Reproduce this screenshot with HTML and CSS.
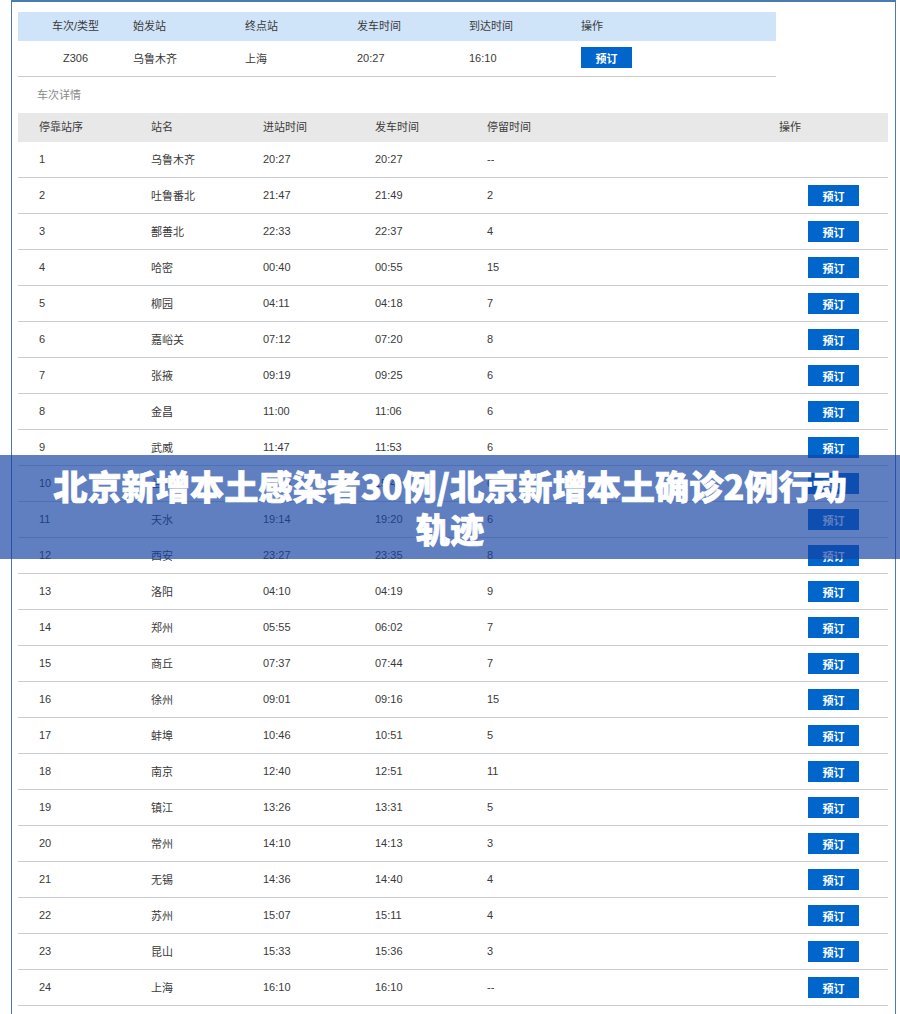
FILE: index.html
```html
<!DOCTYPE html>
<html lang="en">
<head>
    <meta charset="UTF-8">
    <meta name="viewport" content="width=device-width, initial-scale=1.0">
    <title>北京新增本土感染者30例/北京新增本土确诊2例行动轨迹</title>
    <link rel="stylesheet" href="styles.css">
</head>
<body>
    <div class="frame">
        <table class="train-table">
            <thead>
                <tr>
                    <th class="col-train">车次/类型</th>
                    <th>始发站</th>
                    <th>终点站</th>
                    <th>发车时间</th>
                    <th>到达时间</th>
                    <th>操作</th>
                </tr>
            </thead>
            <tbody>
                <tr>
                    <td class="col-train">Z306</td>
                    <td>乌鲁木齐</td>
                    <td>上海</td>
                    <td>20:27</td>
                    <td>16:10</td>
                    <td><button class="book-button">预订</button></td>
                </tr>
            </tbody>
        </table>

        <p class="section-title">车次详情</p>

        <table class="stop-table">
            <thead>
                <tr>
                    <th>停靠站序</th>
                    <th>站名</th>
                    <th>进站时间</th>
                    <th>发车时间</th>
                    <th>停留时间</th>
                    <th>操作</th>
                </tr>
            </thead>
            <tbody>
                <tr><td>1</td><td>乌鲁木齐</td><td>20:27</td><td>20:27</td><td>--</td><td></td></tr>
                <tr><td>2</td><td>吐鲁番北</td><td>21:47</td><td>21:49</td><td>2</td><td class="action"><button class="book-button">预订</button></td></tr>
                <tr><td>3</td><td>鄯善北</td><td>22:33</td><td>22:37</td><td>4</td><td class="action"><button class="book-button">预订</button></td></tr>
                <tr><td>4</td><td>哈密</td><td>00:40</td><td>00:55</td><td>15</td><td class="action"><button class="book-button">预订</button></td></tr>
                <tr><td>5</td><td>柳园</td><td>04:11</td><td>04:18</td><td>7</td><td class="action"><button class="book-button">预订</button></td></tr>
                <tr><td>6</td><td>嘉峪关</td><td>07:12</td><td>07:20</td><td>8</td><td class="action"><button class="book-button">预订</button></td></tr>
                <tr><td>7</td><td>张掖</td><td>09:19</td><td>09:25</td><td>6</td><td class="action"><button class="book-button">预订</button></td></tr>
                <tr><td>8</td><td>金昌</td><td>11:00</td><td>11:06</td><td>6</td><td class="action"><button class="book-button">预订</button></td></tr>
                <tr><td>9</td><td>武威</td><td>11:47</td><td>11:53</td><td>6</td><td class="action"><button class="book-button">预订</button></td></tr>
                <tr><td>10</td><td>兰州</td><td>15:40</td><td>15:46</td><td>6</td><td class="action"><button class="book-button">预订</button></td></tr>
                <tr><td>11</td><td>天水</td><td>19:14</td><td>19:20</td><td>6</td><td class="action"><button class="book-button">预订</button></td></tr>
                <tr><td>12</td><td>西安</td><td>23:27</td><td>23:35</td><td>8</td><td class="action"><button class="book-button">预订</button></td></tr>
                <tr><td>13</td><td>洛阳</td><td>04:10</td><td>04:19</td><td>9</td><td class="action"><button class="book-button">预订</button></td></tr>
                <tr><td>14</td><td>郑州</td><td>05:55</td><td>06:02</td><td>7</td><td class="action"><button class="book-button">预订</button></td></tr>
                <tr><td>15</td><td>商丘</td><td>07:37</td><td>07:44</td><td>7</td><td class="action"><button class="book-button">预订</button></td></tr>
                <tr><td>16</td><td>徐州</td><td>09:01</td><td>09:16</td><td>15</td><td class="action"><button class="book-button">预订</button></td></tr>
                <tr><td>17</td><td>蚌埠</td><td>10:46</td><td>10:51</td><td>5</td><td class="action"><button class="book-button">预订</button></td></tr>
                <tr><td>18</td><td>南京</td><td>12:40</td><td>12:51</td><td>11</td><td class="action"><button class="book-button">预订</button></td></tr>
                <tr><td>19</td><td>镇江</td><td>13:26</td><td>13:31</td><td>5</td><td class="action"><button class="book-button">预订</button></td></tr>
                <tr><td>20</td><td>常州</td><td>14:10</td><td>14:13</td><td>3</td><td class="action"><button class="book-button">预订</button></td></tr>
                <tr><td>21</td><td>无锡</td><td>14:36</td><td>14:40</td><td>4</td><td class="action"><button class="book-button">预订</button></td></tr>
                <tr><td>22</td><td>苏州</td><td>15:07</td><td>15:11</td><td>4</td><td class="action"><button class="book-button">预订</button></td></tr>
                <tr><td>23</td><td>昆山</td><td>15:33</td><td>15:36</td><td>3</td><td class="action"><button class="book-button">预订</button></td></tr>
                <tr><td>24</td><td>上海</td><td>16:10</td><td>16:10</td><td>--</td><td class="action"><button class="book-button">预订</button></td></tr>
            </tbody>
        </table>
    </div>

    <div class="title-banner">北京新增本土感染者30例/北京新增本土确诊2例行动轨迹</div>
</body>
</html>
```

FILE: styles.css
```css
html, body {
    height: 100%;
}
body {
    margin: 0;
    overflow: hidden;
    background: #fff;
    color: #3a3a3a;
    font-family: "Liberation Sans", "Noto Sans CJK SC", sans-serif;
    font-size: 11px;
}
.frame {
    box-sizing: border-box;
    width: 885px;
    height: 1014px;
    margin-left: 11px;
    padding: 10px 6px 0;
    border: 1px solid #4a7bb2;
    border-top-width: 2px;
    border-bottom: none;
}
table {
    border-collapse: collapse;
    table-layout: fixed;
}
th {
    padding: 0 0 3px;
    font-weight: normal;
    text-align: left;
}
td {
    padding: 0 0 2px;
}
.train-table {
    width: 758px;
}
.train-table th {
    height: 26px;
    width: 112px;
    background: #cfe4f8;
}
.train-table th:first-child {
    width: 115px;
}
.train-table th:last-child {
    width: 195px;
}
.train-table td {
    height: 33px;
    border-bottom: 1px solid #c8ccd0;
}
.train-table .col-train {
    text-align: center;
}
.section-title {
    height: 36px;
    margin: 0;
    padding-left: 19px;
    line-height: 36px;
    color: #888;
}
.stop-table {
    width: 870px;
}
.stop-table th {
    height: 29px;
    width: 112px;
    padding-left: 21px;
    box-sizing: border-box;
    background: #e8e8e8;
}
.stop-table th:nth-child(5) {
    width: 292px;
}
.stop-table th:last-child {
    width: 130px;
}
.stop-table td {
    height: 33px;
    padding-left: 21px;
    border-bottom: 1px solid #c8ccd0;
}
.stop-table td.action {
    height: 35px;
    padding: 0 0 0 50px;
}
.book-button {
    display: block;
    width: 51px;
    height: 21px;
    padding: 0;
    border: none;
    background: #0066cc;
    color: #fff;
    font-family: inherit;
    font-size: 11px;
    font-weight: bold;
}
.title-banner {
    position: absolute;
    top: 455px;
    left: 0;
    box-sizing: border-box;
    width: 900px;
    height: 104px;
    padding: 9px 40px 0;
    background: rgba(20, 67, 162, 0.68);
    color: #fff;
    font-family: "Noto Sans CJK SC", sans-serif;
    font-size: 34.2px;
    font-weight: 900;
    line-height: 43px;
    text-align: center;
    -webkit-text-stroke: 0.7px #fff;
}
```
